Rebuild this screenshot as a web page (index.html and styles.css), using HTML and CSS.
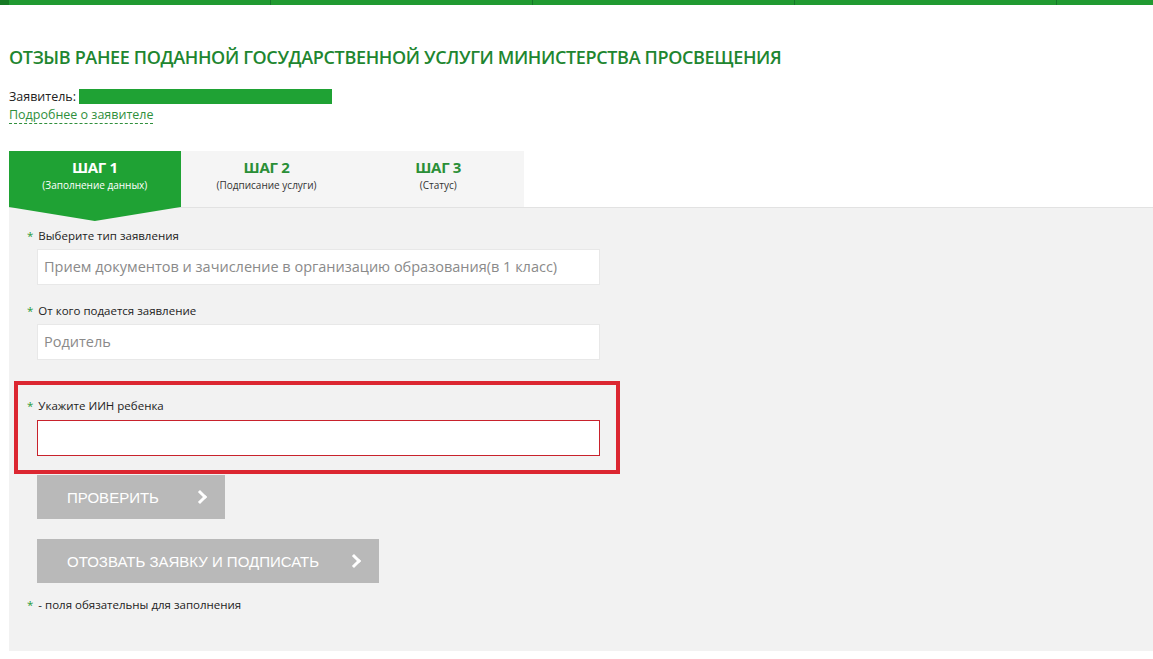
FILE: index.html
```html
<!DOCTYPE html>
<html lang="ru">
<head>
    <meta charset="UTF-8">
    <title>Отзыв ранее поданной государственной услуги</title>
    <link rel="stylesheet" href="styles.css">
</head>
<body>
    <div class="topbar">
        <span class="topbar-start"></span>
        <span class="topbar-item"></span>
        <span class="topbar-item"></span>
        <span class="topbar-item"></span>
        <span class="topbar-item"></span>
        <span class="topbar-item last"></span>
    </div>

    <div class="page">
        <h1 class="title">Отзыв ранее поданной государственной услуги Министерства Просвещения</h1>

        <div class="applicant">
            <div class="applicant-row">Заявитель: <span class="applicant-name"></span></div>
            <a class="applicant-link" href="#">Подробнее о заявителе</a>
        </div>

        <div class="steps">
            <div class="step active">
                <div class="step-title">ШАГ 1</div>
                <div class="step-sub">(Заполнение данных)</div>
            </div>
            <div class="step">
                <div class="step-title">ШАГ 2</div>
                <div class="step-sub">(Подписание услуги)</div>
            </div>
            <div class="step">
                <div class="step-title">ШАГ 3</div>
                <div class="step-sub">(Статус)</div>
            </div>
        </div>

        <div class="panel">
            <div class="field">
                <label class="field-label"><span class="req">*</span>Выберите тип заявления</label>
                <div class="field-input">Прием документов и зачисление в организацию образования(в 1 класс)</div>
            </div>

            <div class="field">
                <label class="field-label"><span class="req">*</span>От кого подается заявление</label>
                <div class="field-input">Родитель</div>
            </div>

            <div class="highlight">
                <div class="field">
                    <label class="field-label"><span class="req">*</span>Укажите ИИН ребенка</label>
                    <input class="field-input error" type="text">
                </div>
            </div>

            <button class="btn btn-check">ПРОВЕРИТЬ <span class="chevron"></span></button>
            <button class="btn btn-revoke">ОТОЗВАТЬ ЗАЯВКУ И ПОДПИСАТЬ <span class="chevron"></span></button>

            <p class="note"><span class="req">*</span>- поля обязательны для заполнения</p>
        </div>
    </div>
</body>
</html>
```

FILE: styles.css
```css
* {
    margin: 0;
    padding: 0;
    box-sizing: border-box;
}
body {
    background: #fff;
    font-family: 'Open Sans', sans-serif;
    color: #222;
    overflow: hidden;
}
.topbar {
    display: flex;
    height: 5px;
    background: #219a31;
}
.topbar-start {
    width: 9px;
    background: #167a24;
}
.topbar-item {
    width: 262px;
    border-right: 1px solid #16772a;
}
.topbar-item.last {
    flex: 1;
    border-right: none;
}
.page {
    padding-left: 9px;
}
.title {
    margin-top: 41px;
    font-size: 18px;
    font-weight: 600;
    color: #1e8630;
    text-transform: uppercase;
    letter-spacing: -0.35px;
    line-height: 22px;
}
.applicant {
    margin-top: 19px;
    font-size: 12.5px;
}
.applicant-row {
    display: flex;
    align-items: center;
    gap: 3px;
    height: 19px;
}
.applicant-name {
    display: inline-block;
    width: 253px;
    height: 15px;
    background: #1fa234;
}
.applicant-link {
    display: inline-block;
    color: #2f8f3c;
    text-decoration: none;
    border-bottom: 1px dashed #2f8f3c;
    line-height: 17px;
}
.steps {
    display: flex;
    margin-top: 27px;
    width: 515px;
    background: #f5f5f5;
}
.step {
    position: relative;
    width: 172px;
    height: 56px;
    text-align: center;
    padding-top: 7px;
    color: #2a8f37;
}
.step.active {
    background: #1fa234;
    color: #fff;
}
.step.active::after {
    content: "";
    position: absolute;
    left: 0;
    top: 100%;
    width: 100%;
    height: 14px;
    background: #1fa234;
    clip-path: polygon(0 0, 100% 0, 50% 100%);
}
.step-title {
    font-size: 15px;
    font-weight: 700;
    line-height: 18px;
    letter-spacing: -0.3px;
}
.step-sub {
    font-size: 10px;
    line-height: 18px;
    color: #333;
}
.step.active .step-sub {
    color: #fff;
}
.panel {
    background: #f2f2f2;
    border-top: 1px solid #e2e2e2;
    height: 444px;
    padding: 19px 0 0 18px;
}
.field {
    width: 573px;
}
.field-label {
    display: block;
    font-size: 11.5px;
    line-height: 17px;
    color: #222;
    margin-bottom: 5px;
}
.req {
    color: #2a9a38;
    margin-right: 5px;
}
.field-input {
    display: block;
    margin-left: 10px;
    width: 563px;
    height: 36px;
    background: #fff;
    border: 1px solid #e8e8e8;
    padding: 0 6px;
    font-family: inherit;
    font-size: 14.5px;
    line-height: 34px;
    color: #8a8a8a;
    margin-bottom: 17px;
}
.field-input.error {
    border-color: #c8222c;
    outline: none;
}
.highlight {
    margin-left: -13px;
    width: 606px;
    border: 4px solid #dc2731;
    padding: 12px 0 14px 9px;
    margin-top: 21px;
}
.highlight .field-label {
    margin-bottom: 6px;
}
.highlight .field-input {
    margin-bottom: 0;
}
.btn {
    display: flex;
    align-items: center;
    margin-left: 10px;
    height: 44px;
    border: none;
    background: #b9b9b9;
    color: #fff;
    font-family: 'Liberation Sans', Arial, sans-serif;
    font-size: 15px;
    padding-left: 30px;
    cursor: pointer;
}
.btn-check {
    width: 188px;
    margin-top: 1px;
}
.btn-revoke {
    width: 342px;
    margin-top: 20px;
}
.chevron {
    width: 10px;
    height: 10px;
    border-top: 3px solid #fff;
    border-right: 3px solid #fff;
    transform: rotate(45deg);
    margin-left: auto;
    margin-right: 20px;
}
.note {
    margin-top: 13px;
    font-size: 11.5px;
    line-height: 17px;
}
```
